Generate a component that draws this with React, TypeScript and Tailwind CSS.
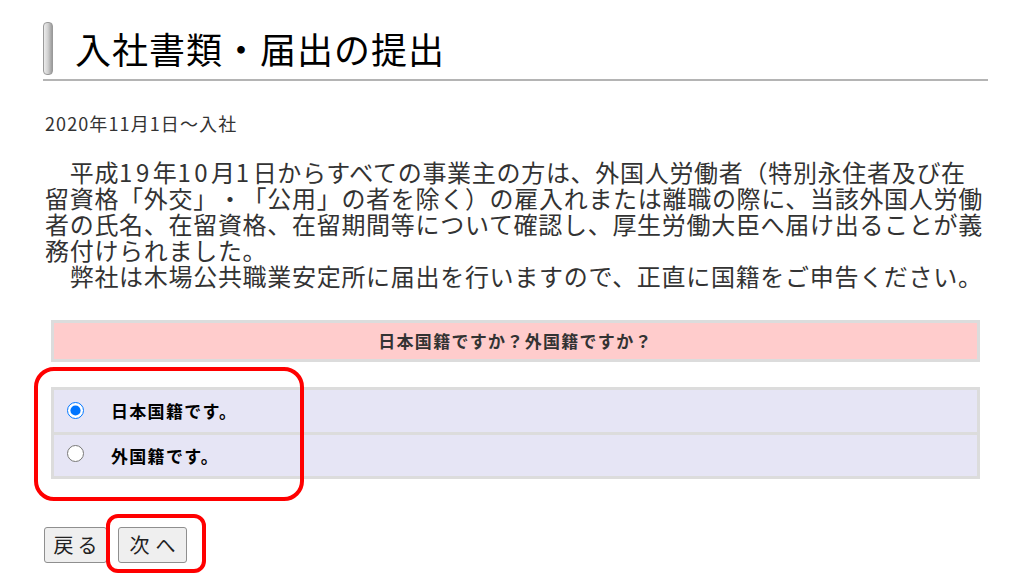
import React from "react";

export default function App() {
  const d = "tracking-[3.5px]";
  return (
    <div
      className="relative w-[1012px] h-[581px] overflow-hidden bg-white text-[#333] [text-spacing-trim:space-all]"
      style={{ fontFamily: '"Noto Sans CJK JP", "Noto Sans", sans-serif' }}
    >
      <div className="pl-[43px] pr-[24px] pt-[22px]">
        <div className="flex items-center h-[53px]">
          <div className="w-[10px] h-[53px] rounded-[4px] border border-[#9a9a9a] bg-linear-to-r from-[#ececec] via-[#d0d0d0] to-[#9c9c9c]" />
          <h1 className="ml-[22px] text-[36px] leading-[53px] tracking-[1px] text-black font-normal">
            入社書類・届出の提出
          </h1>
        </div>
        <div className="mt-[4px] h-[2px] bg-[#b4b4b4]" />

        <div className="mt-[30px] ml-[2px] text-[18px] leading-[24px] tracking-[1.1px]">2020年11月1日～入社</div>

        <p className="mt-[24px] ml-[2px] text-[24px] leading-[26px] tracking-[0.7px] whitespace-nowrap">
          {"\u3000"}平成<span className={d}>19</span>年<span className={d}>10</span>月<span className={d}>1</span>日からすべての事業主の方は、外国人労働者（特別永住者及び在
          <br />
          留資格「外交」・「公用」の者を除く）の雇入れまたは離職の際に、当該外国人労働
          <br />
          者の氏名、在留資格、在留期間等について確認し、厚生労働大臣へ届け出ることが義
          <br />
          務付けられました。
          <br />
          {"\u3000"}弊社は木場公共職業安定所に届出を行いますので、正直に国籍をご申告ください。
        </p>

        <div className="mx-[8px] mt-[31px] border-[3px] border-[#dcdcdc] bg-[#ffcccc] h-[42px] flex items-center justify-center">
          <span className="text-[17px] font-bold tracking-[1.3px] text-[#333]">日本国籍ですか？外国籍ですか？</span>
        </div>

        <div className="mx-[8px] mt-[25px] border-[3px] border-[#dcdcdc] bg-[#e6e5f5]">
          <label className="flex items-center h-[45px] border-b-[3px] border-[#dcdcdc]">
            <input type="radio" name="nat" defaultChecked className="ml-[13px] w-[17px] h-[17px] -mt-[2px]" />
            <span className="ml-[27px] text-[17px] font-bold tracking-[1.3px] text-black">日本国籍です。</span>
          </label>
          <label className="flex items-center h-[41px]">
            <input type="radio" name="nat" className="ml-[13px] w-[17px] h-[17px] -mt-[4px]" />
            <span className="ml-[27px] text-[17px] font-bold tracking-[1.3px] text-black">外国籍です。</span>
          </label>
        </div>

        <div className="mt-[48px] ml-[1px] flex gap-[11px]">
          <button className="w-[63px] h-[36px] rounded-[3px] border border-[#8f8f8f] bg-[#efefef] text-[20px] tracking-[4px] pl-[4px] text-[#222]">
            戻る
          </button>
          <button className="w-[69px] h-[36px] rounded-[3px] border border-[#8f8f8f] bg-[#efefef] text-[20px] tracking-[6px] pl-[6px] text-[#222]">
            次へ
          </button>
        </div>
      </div>

      <div className="absolute left-[34px] top-[367px] w-[270px] h-[134px] rounded-[20px] border-[4px] border-[#ff0000] pointer-events-none" />
      <div className="absolute left-[106px] top-[514px] w-[100px] h-[59px] rounded-[12px] border-[4px] border-[#ff0000] pointer-events-none" />
    </div>
  );
}
